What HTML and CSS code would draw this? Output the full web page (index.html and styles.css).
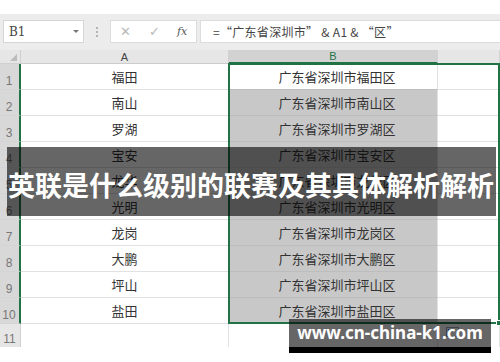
FILE: index.html
```html
<!DOCTYPE html>
<html lang="zh">
<head>
<meta charset="utf-8">
<title>英联是什么级别的联赛及其具体解析解析</title>
<link rel="stylesheet" href="styles.css">
</head>
<body>
<div class="page">
  <div class="sheet">
    <div class="toolbar">
      <div class="namebox"><span class="ref">B1</span><span class="caret"></span></div>
      <div class="dots"><i></i><i></i><i></i></div>
      <div class="fxbox">
        <span class="ico x">✕</span>
        <span class="ico ok">✓</span>
        <span class="ico fx">fx</span>
      </div>
      <div class="formula">=“广东省深圳市” &amp; A1 &amp; “区”</div>
    </div>
    <div class="grid">
      <div class="corner"><span class="tri"></span></div>
      <div class="colhead">A</div>
      <div class="colhead sel">B</div>
      <div class="colhead">&nbsp;</div>

      <div class="rowhead sel">1</div><div class="cell">福田</div><div class="cell b active">广东省深圳市福田区</div><div class="cell"></div>
      <div class="rowhead sel">2</div><div class="cell">南山</div><div class="cell b">广东省深圳市南山区</div><div class="cell"></div>
      <div class="rowhead sel">3</div><div class="cell">罗湖</div><div class="cell b">广东省深圳市罗湖区</div><div class="cell"></div>
      <div class="rowhead sel">4</div><div class="cell">宝安</div><div class="cell b">广东省深圳市宝安区</div><div class="cell"></div>
      <div class="rowhead sel">5</div><div class="cell">龙华</div><div class="cell b">广东省深圳市龙华区</div><div class="cell"></div>
      <div class="rowhead sel">6</div><div class="cell">光明</div><div class="cell b">广东省深圳市光明区</div><div class="cell"></div>
      <div class="rowhead sel">7</div><div class="cell">龙岗</div><div class="cell b">广东省深圳市龙岗区</div><div class="cell"></div>
      <div class="rowhead sel">8</div><div class="cell">大鹏</div><div class="cell b">广东省深圳市大鹏区</div><div class="cell"></div>
      <div class="rowhead sel">9</div><div class="cell">坪山</div><div class="cell b">广东省深圳市坪山区</div><div class="cell"></div>
      <div class="rowhead sel">10</div><div class="cell">盐田</div><div class="cell b">广东省深圳市盐田区</div><div class="cell"></div>
      <div class="rowhead last">11</div><div class="cell last"></div><div class="cell last"></div><div class="cell last"></div>

      <div class="selection"><span class="handle"></span></div>
      <div class="quick"><i></i></div>
    </div>
    <div class="banner"><h1>英联是什么级别的联赛及其具体解析解析</h1></div>
    <div class="watermark">www.cn-china-k1.com</div>
  </div>
</div>
</body>
</html>
```

FILE: styles.css
```css
* { box-sizing: border-box; margin: 0; padding: 0; }
html, body { background: #fff; }
body { width: 500px; height: 362px; overflow: hidden; font-family: "Noto Sans CJK SC", "Noto Sans", sans-serif; }
.page { padding-top: 14px; position: relative; height: 362px; }
.sheet { height: 333px; overflow: hidden; background: #fff; }

.toolbar {
  height: 36px;
  background: #ececec;
  display: flex;
  align-items: flex-start;
  padding: 6px 0 0 3px;
}
.namebox {
  width: 81px; height: 23px;
  background: #fff;
  border: 1px solid #d6d6d6;
  display: flex; align-items: center; justify-content: space-between;
  padding: 0 4px 0 5px;
}
.ref { font-family: "DejaVu Serif", "Liberation Serif", serif; font-size: 12px; color: #444; }
.caret { width: 0; height: 0; border-left: 3px solid transparent; border-right: 3px solid transparent; border-top: 3px solid #777; }
.dots { width: 26px; height: 23px; display: flex; flex-direction: column; align-items: center; justify-content: center; gap: 2px; }
.dots i { display: block; width: 2px; height: 2px; background: #b5b5b5; }
.fxbox {
  width: 87px; height: 23px;
  background: #fff;
  border: 1px solid #dcdcdc;
  display: flex; align-items: center;
  padding-left: 9px;
}
.ico { color: #b8b8b8; font-size: 13px; line-height: 1; font-family: "DejaVu Sans", sans-serif; }
.ico.x { width: 29px; }
.ico.ok { width: 28px; }
.ico.fx { color: #555; font-family: "DejaVu Serif", serif; font-style: italic; font-size: 11px; }
.formula {
  flex: 1;
  margin-left: 3px;
  height: 23px;
  background: #fff;
  border: 1px solid #dcdcdc;
  border-right: none;
  padding-left: 12px;
  font-size: 12px;
  line-height: 21px;
  color: #444;
  white-space: pre;
  letter-spacing: 0.3px;
}

.grid {
  position: relative;
  display: grid;
  grid-template-columns: 21px 208px 209px 1fr;
  grid-template-rows: 14px repeat(10, 26px) 23px;
}
.corner { background: #e6e6e6; border-right: 1px solid #d0d0d0; border-bottom: 1px solid #cfcfcf; position: relative; }
.tri { position: absolute; right: 3px; bottom: 2px; width: 0; height: 0; border-left: 7px solid transparent; border-bottom: 7px solid #bcbcbc; }
.colhead {
  background: #e6e6e6;
  border-right: 1px solid #d2d2d2;
  border-bottom: 1px solid #cdcdcd;
  font-family: "Liberation Sans", "Noto Sans", sans-serif;
  font-size: 11px; color: #444;
  text-align: center; line-height: 14px;
}
.colhead.sel { background: #d2d2d2; border-bottom: 2px solid #217346; color: #217346; line-height: 13px; }
.rowhead {
  background: #e6e6e6;
  border-bottom: 1px solid #d4d4d4;
  font-family: "Liberation Sans", "Noto Sans", sans-serif;
  font-size: 12px; color: #777;
  display: flex; align-items: flex-end; justify-content: center;
  padding-bottom: 1px; padding-right: 1px;
}
.rowhead.sel { background: #d8d8d8; border-right: 2px solid #217346; }
.rowhead.last { border-right: 1px solid #d0d0d0; border-bottom: none; }
.cell {
  border-right: 1px solid #e1e1e1;
  border-bottom: 1px solid #e1e1e1;
  font-size: 13px; color: #333;
  text-align: center; line-height: 25px;
  white-space: nowrap;
}
.cell.b { background: #c8c8c8; border-bottom-color: #bdbdbd; padding-left: 8px; }
.cell.b.active { background: #fff; }
.cell.last { border-bottom: none; }
.selection {
  position: absolute;
  grid-column: 3; grid-row: 2 / 12;
  top: -1px; left: -1px; right: 0; bottom: 0;
  border: 2px solid #217346;
  pointer-events: none;
}
.handle { position: absolute; right: -4px; bottom: -4px; width: 6px; height: 6px; background: #217346; border: 1px solid #fff; }
.quick {
  position: absolute;
  grid-column: 4; grid-row: 12;
  left: 8px; top: 3px;
  width: 13px; height: 10px;
  border: 1px solid #9aa7b8;
  background: #fff;
}
.quick i { display: block; margin: 1px; width: 6px; height: 3px; background: #4a78c0; }

.banner {
  position: absolute;
  left: 7px; top: 147px;
  width: 489px; height: 69px;
  background: rgba(0, 0, 0, 0.6);
  display: flex; align-items: center;
  padding: 6px 0 0 1px;
}
.banner h1 {
  color: #fff;
  font-family: "Noto Sans CJK SC", sans-serif;
  font-weight: 700;
  font-size: 27px;
  line-height: 1;
  white-space: nowrap;
}
.watermark {
  position: absolute;
  left: 289px; top: 319px;
  width: 202px; height: 34px;
  background: rgba(0, 0, 0, 0.6);
  border-bottom: 6px solid #000;
  color: #fff;
  font-family: "Noto Sans", "Open Sans", sans-serif;
  font-weight: 700;
  font-size: 17px;
  line-height: 27px;
  text-align: center;
  white-space: nowrap;
}
```
